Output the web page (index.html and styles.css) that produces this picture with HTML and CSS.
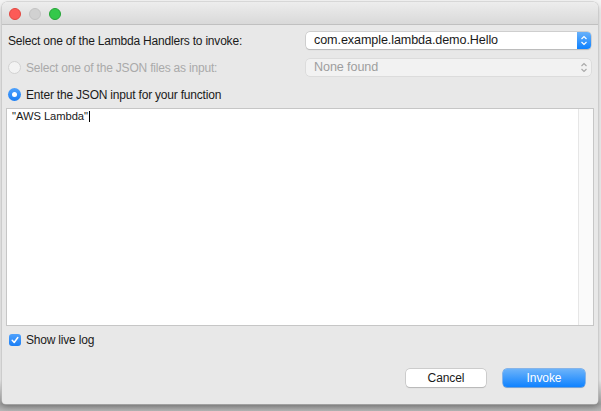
FILE: index.html
```html
<!DOCTYPE html>
<html>
<head>
<meta charset="utf-8">
<link rel="stylesheet" href="styles.css">
</head>
<body>
<div class="window">
  <div class="titlebar">
    <span class="light red"></span>
    <span class="light grey"></span>
    <span class="light green"></span>
  </div>
  <div class="content">
    <div class="row row-first">
      <span class="label">Select one of the Lambda Handlers to invoke:</span>
      <div class="select active">
        <span class="select-text">com.example.lambda.demo.Hello</span>
        <span class="stepper blue">
          <svg width="8" height="11" viewBox="0 0 8 11"><path d="M1.5 4 L4 1.5 L6.5 4 M1.5 7 L4 9.5 L6.5 7" fill="none" stroke="#fff" stroke-width="1.2"/></svg>
        </span>
      </div>
    </div>
    <div class="row row-second">
      <label class="radio-label disabled"><span class="radio off"></span>Select one of the JSON files as input:</label>
      <div class="select disabled-select">
        <span class="select-text">None found</span>
        <span class="stepper">
          <svg width="8" height="11" viewBox="0 0 8 11"><path d="M1.5 4 L4 1.5 L6.5 4 M1.5 7 L4 9.5 L6.5 7" fill="none" stroke="#a8a8a8" stroke-width="1.1"/></svg>
        </span>
      </div>
    </div>
    <div class="row row-third">
      <label class="radio-label"><span class="radio on"></span>Enter the JSON input for your function</label>
    </div>
    <div class="editor">
      <div class="editor-text">"AWS Lambda"<span class="caret"></span></div>
      <div class="scroll-track"></div>
    </div>
    <label class="check-label"><span class="checkbox">
      <svg width="12" height="12" viewBox="0 0 12 12"><path d="M3.2 6.3 L5.2 8.5 L8.8 3.5" fill="none" stroke="#fff" stroke-width="1.5" stroke-linecap="round" stroke-linejoin="round"/></svg>
    </span>Show live log</label>
    <div class="buttons">
      <button class="btn">Cancel</button>
      <button class="btn primary">Invoke</button>
    </div>
  </div>
</div>
</body>
</html>
```

FILE: styles.css
```css
html, body {
  margin: 0;
  padding: 0;
}
body {
  width: 601px;
  height: 411px;
  background: linear-gradient(to bottom, #f4f4f4 0, #f4f4f4 380px, #a2a2a2 404px, #b8b8b8 411px);
  font-family: "Liberation Sans", Arial, sans-serif;
  font-size: 12px;
  letter-spacing: -0.2px;
  color: #1a1a1a;
  overflow: hidden;
}
.window {
  margin: 2px 0 0 2px;
  width: 596px;
  height: 402px;
  background: #e8e8e8;
  border-radius: 5px 5px 4px 4px;
  box-shadow: 0 0 0 0.5px #c4c4c4, 0 3px 6px rgba(0,0,0,0.3);
  overflow: hidden;
  display: flex;
  flex-direction: column;
}
.titlebar {
  height: 20px;
  padding-top: 2px;
  flex: none;
  background: linear-gradient(to bottom, #ededed, #d9d9d9);
  border-bottom: 1px solid #c0c0c0;
  display: flex;
  align-items: center;
  gap: 8px;
  padding-left: 7px;
}
.light {
  width: 12px;
  height: 12px;
  border-radius: 50%;
  box-sizing: border-box;
}
.light.red { background: #fc5b57; border: 0.5px solid #e24841; }
.light.grey { background: #d1d1d1; border: 0.5px solid #c3c3c3; }
.light.green { background: #34c84a; border: 0.5px solid #24a436; }
.content {
  flex: 1;
  display: flex;
  flex-direction: column;
  padding: 0 4px 0 3px;
}
.row {
  display: flex;
  align-items: center;
  justify-content: space-between;
  padding-right: 3px;
  height: 17px;
}
.row-first { margin-top: 7px; }
.row-second { margin-top: 10px; }
.row-third { margin-top: 10px; }
.label { padding-left: 3px; }
.select {
  width: 285px;
  height: 17px;
  box-sizing: border-box;
  border-radius: 4px;
  display: flex;
  align-items: center;
  justify-content: space-between;
  overflow: hidden;
  font-size: 12.6px;
  letter-spacing: -0.1px;
}
.select.active {
  background: #fff;
  box-shadow: 0 0 0 0.5px #b9b9b9, 0 0.5px 1px rgba(0,0,0,0.2);
}
.select.disabled-select {
  background: #f2f2f2;
  box-shadow: 0 0 0 0.5px #cfcfcf;
  color: #9e9e9e;
}
.select-text { padding-left: 8px; line-height: 17px; }
.stepper {
  width: 14px;
  height: 17px;
  display: flex;
  align-items: center;
  justify-content: center;
}
.stepper.blue {
  background: linear-gradient(to bottom, #69b1fa, #0d81ff);
}
.radio-label {
  display: flex;
  align-items: center;
  gap: 5px;
  padding-left: 3px;
}
.radio-label.disabled { color: #aaaaaa; }
.radio {
  width: 13px;
  height: 13px;
  box-sizing: border-box;
  border-radius: 50%;
  flex: none;
}
.radio.off {
  background: #f3f3f3;
  border: 1px solid #d2d2d2;
}
.radio.on {
  background: linear-gradient(to bottom, #4fa1fc, #1a7ef5);
  display: flex;
  align-items: center;
  justify-content: center;
}
.radio.on::after {
  content: "";
  width: 5px;
  height: 5px;
  border-radius: 50%;
  background: #fff;
}
.editor {
  margin-top: 5px;
  margin-left: 1px;
  height: 218px;
  width: 588px;
  box-sizing: border-box;
  background: #fff;
  border: 1px solid #c6c6c6;
  display: flex;
}
.editor-text {
  flex: 1;
  padding: 1px 0 0 5px;
  font-size: 11.2px;
  letter-spacing: -0.05px;
  line-height: 13px;
  display: flex;
  align-items: flex-start;
}
.caret {
  width: 1px;
  height: 11px;
  background: #000;
  margin-left: 1px;
  margin-top: 1px;
}
.scroll-track {
  width: 14px;
  background: #fafafa;
  border-left: 1px solid #e6e6e6;
}
.check-label {
  display: flex;
  align-items: center;
  gap: 5px;
  margin-top: 7px;
  padding-left: 4px;
  height: 13px;
}
.checkbox {
  width: 12px;
  height: 12px;
  border-radius: 3px;
  background: linear-gradient(to bottom, #4fa1fc, #1a7ef5);
  display: flex;
  align-items: center;
  justify-content: center;
}
.buttons {
  display: flex;
  justify-content: flex-end;
  gap: 17px;
  margin-top: 23px;
  padding-right: 9px;
}
.btn {
  font-family: "Liberation Sans", Arial, sans-serif;
  font-size: 12px;
  letter-spacing: -0.1px;
  height: 18px;
  width: 80px;
  padding: 0;
  border: none;
  border-radius: 4px;
  background: #fff;
  color: #1a1a1a;
  box-shadow: 0 0 0 0.5px #b5b5b5, 0 0.5px 1px rgba(0,0,0,0.2);
}
.btn.primary {
  width: 82px;
  color: #fff;
  background: linear-gradient(to bottom, #6cb3fa, #0f82ff);
  box-shadow: 0 0 0 0.5px #2a86f0, 0 0.5px 1px rgba(0,0,0,0.2);
}
```
